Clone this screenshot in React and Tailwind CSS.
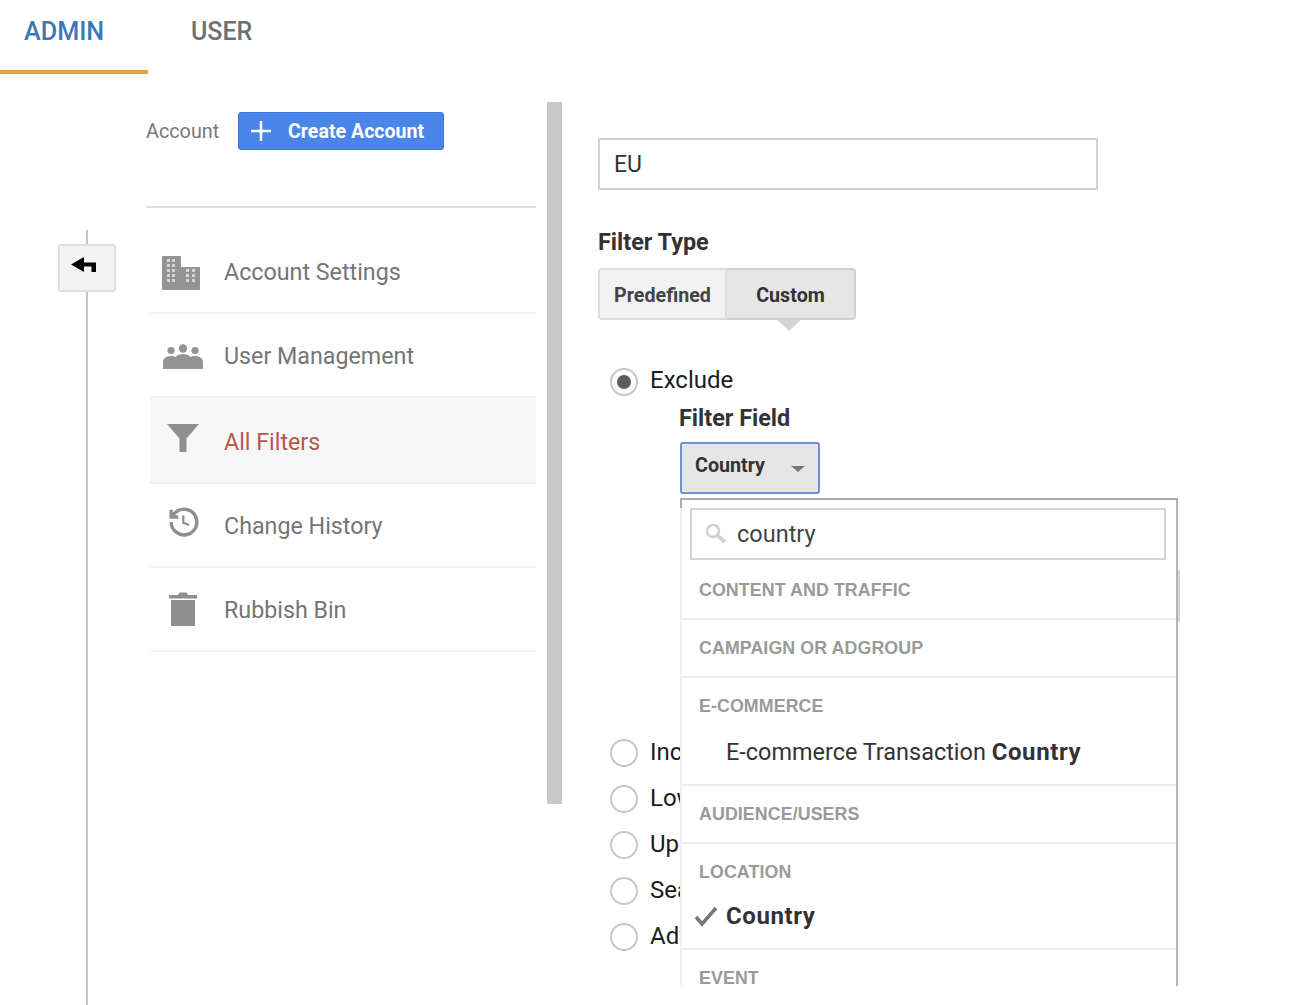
const roboto = "font-['Roboto',sans-serif]";

function BuildingIcon() {
  const holes = [[6,4],[11,4],[6,9],[11,9],[6,14],[11,14],[6,19],[11,19],[6,24],[11,24],[25,14],[31,14],[25,19],[31,19],[25,24],[31,24]];
  return (
    <svg width="40" height="36" viewBox="0 0 40 36">
      <path d="M1 1h19v11h19v23H1z" fill="#949494" />
      {holes.map(([x, y]) => <rect key={`${x}-${y}`} x={x} y={y} width="3" height="3" fill="#d6d6d6" />)}
    </svg>
  );
}
function UsersIcon() {
  return (
    <svg width="40" height="26" viewBox="0 0 40 26" fill="#949494">
      <circle cx="8" cy="6.5" r="3.6" /><circle cx="20" cy="4.5" r="4.2" /><circle cx="32" cy="6.5" r="3.6" />
      <path d="M0 25v-7c0-4 4-6 8-6 2 0 3 .4 4.300 1 2-2 5-3 7.700-3s5.700 1 7.700 3c1.300-.6 2.300-1 4.300-1 4 0 8 2 8 6v7z" />
    </svg>
  );
}
function FilterIcon() {
  return (
    <svg width="34" height="30" viewBox="0 0 34 30" fill="#8f8f8f">
      <path d="M1 1h32L20.500 15.500V29h-7V15.500z" />
    </svg>
  );
}
function HistoryIcon() {
  return (
    <svg width="30" height="30" viewBox="2 1.500 21 21" fill="none" stroke="#8f8f8f" strokeWidth="2.400">
      <path d="M3.500 12a9 9 0 1 0 2.800-6.500L3.500 8" />
      <path d="M3.500 3.500V8.500H8.500" />
      <path d="M12 7.500V12.500l4 1.500" strokeWidth="1.600" />
    </svg>
  );
}
function TrashIcon() {
  return (
    <svg width="30" height="36" viewBox="0 0 30 36" fill="#8f8f8f">
      <path d="M1 4h9l1.500-2.500h7L20 4h9v3.500H1z" />
      <rect x="3" y="9" width="24" height="26" />
    </svg>
  );
}
function BackIcon() {
  return (
    <svg width="25" height="16" viewBox="0 0 25 16" fill="#000">
      <path d="M0 7.500 13 0V5.500H25V15H20.500V9.500H13V15z" />
    </svg>
  );
}

function NavItem({ icon, label, active, iconClass }) {
  return (
    <div className={`flex items-center border-b-2 ml-1 ${active ? "pt-[5px] bg-[#f7f7f7] border-[#f0f0f0] h-[86px]" : "pt-[3px] border-[#f2f2f2] h-[84px]"}`}>
      <div className={`w-[74px] flex justify-center ${iconClass || "pr-[8px]"}`}>{icon}</div>
      <span className={`text-[23.250px] ${active ? "text-[#b5574e]" : "text-[#757575]"} ${roboto}`}>{label}</span>
    </div>
  );
}

function Radio({ checked, label, circleClass, labelClass }) {
  return (
    <div className="flex items-center h-[46px] pl-[12px]">
      <span className={`w-[28px] h-[28px] rounded-full border-2 border-[#c8c8c8] flex items-center justify-center shrink-0 ${circleClass || ""}`}>
        {checked && <span className="w-[14px] h-[14px] rounded-full bg-[#5c5c5c]" />}
      </span>
      <span className={`ml-[12px] text-[24px] text-[#1c1c1c] ${labelClass || "mb-[2px]"} ${roboto}`}>{label}</span>
    </div>
  );
}

function Section({ title, children, h = "h-[58px]", pt = "pt-[13px]" }) {
  return (
    <div className={`${h} ${pt} border-b-2 border-[#ececec] pl-[17px]`}>
      <div className="text-[17.800px] leading-[30px] font-bold text-[#9a9a9a] font-['Liberation_Sans',sans-serif] tracking-[0.1px]">{title}</div>
      {children}
    </div>
  );
}

export default function App() {
  return (
    <div className="w-[1316px] h-[1005px] overflow-hidden bg-white flex flex-col">
      <header className={`h-[74px] flex shrink-0 ${roboto}`}>
        <div className="w-[148px] border-b-[4px] border-[#e3a23f] pl-[24px] pt-[15px] text-[25.200px] leading-[33px] font-medium text-[#3b78b8]">ADMIN</div>
        <div className="pl-[43px] pt-[15px] text-[25px] leading-[33px] font-medium text-[#6f6f6f]">USER</div>
      </header>

      <div className="flex flex-1 min-h-0">
        <div className="w-[146px] shrink-0 pl-[58px] pt-[156px] flex flex-col">
          <div className="w-[58px] flex flex-col items-center flex-1">
            <div className="w-[2px] h-[14px] bg-[#c8c8c8]" />
            <div className="w-[58px] h-[48px] rounded-[3px] border-2 border-[#e0e0e0] bg-[#f3f3f3] flex pl-[11px] pt-[11px]"><BackIcon /></div>
            <div className="w-[2px] flex-1 bg-[#c8c8c8]" />
          </div>
        </div>

        <nav className="w-[390px] shrink-0 pt-[38px]">
          <div className="flex items-center h-[38px]">
            <span className={`w-[92px] shrink-0 pt-[2px] text-[19.800px] text-[#777] ${roboto}`}>Account</span>
            <button className={`w-[206px] h-[38px] rounded-[3px] bg-[#4a86e8] border border-[#3b78d8] text-white flex items-center pl-[10px] ${roboto}`}>
              <svg width="24" height="24" viewBox="0 0 24 24" stroke="#fff" strokeWidth="2.500"><path d="M12 2v20M2 12h20" /></svg>
              <span className="ml-[15px] pt-[1px] text-[19.600px] font-bold">Create Account</span>
            </button>
          </div>
          <div className="h-[2px] bg-[#dedede] mt-[56px] mb-[22px]" />
          <div className="mt-[1px]">
            <NavItem icon={<BuildingIcon />} label="Account Settings" iconClass="pr-[12px]" />
            <NavItem icon={<UsersIcon />} label="User Management" />
            <NavItem icon={<FilterIcon />} label="All Filters" active iconClass="pr-[8px] mb-[10px]" />
            <NavItem icon={<HistoryIcon />} label="Change History" iconClass="pr-[6px] mb-[9px]" />
            <NavItem icon={<TrashIcon />} label="Rubbish Bin" iconClass="pr-[8px] mb-[3px]" />
          </div>
        </nav>

        <div className="ml-[11px] mt-[28px] w-[15px] h-[702px] shrink-0 bg-[#c8c8c8]" />

        <main className={`ml-[36px] pt-[64px] flex-1 relative ${roboto}`}>
          <div className="w-[500px] h-[52px] border-2 border-[#d0d0d0] flex items-center pl-[14px] pt-[2px] text-[23px] text-[#333]">EU</div>
          <h2 className="mt-[37px] text-[23.400px] leading-[30px] font-bold text-[#333]">Filter Type</h2>
          <div className="mt-[11px] flex w-[258px] h-[52px] relative">
            <div className="w-[129px] pt-[4px] rounded-l-[4px] border-2 border-[#dcdcdc] bg-[#f2f2f2] flex items-center justify-center text-[19.700px] font-bold text-[#444]">Predefined</div>
            <div className="w-[129px] pt-[4px] rounded-r-[4px] border-2 border-l-0 border-[#d0d0d0] bg-[#e6e6e6] flex items-center justify-center text-[19.700px] font-bold text-[#333]">Custom</div>
            <span className="absolute left-[179px] top-[52px] w-0 h-0 border-x-[12px] border-x-transparent border-t-[11px] border-t-[#d6d6d6]" />
          </div>
          <div className="mt-[37px]"><Radio checked label="Exclude" circleClass="mt-[3px]" labelClass="mb-0" /></div>
          <div className="pl-[82px]">
            <h3 className="-ml-[1px] text-[23.400px] leading-[30px] font-bold text-[#333]">Filter Field</h3>
            <div className="mt-[9px] w-[140px] h-[52px] rounded-[3px] border-2 border-[#6a94cf] bg-[#e6e6e6] flex items-center pl-[13px] text-[19.700px] font-bold text-[#333]">
              <span className="mb-[4px]">Country</span>
              <span className="ml-[26px] mt-[2px] w-0 h-0 border-x-[7px] border-x-transparent border-t-[6px] border-t-[#777]" />
            </div>
          </div>
          <div className="mt-[236px]">
            <Radio label="Include" />
            <Radio label="Lowercase" />
            <Radio label="Uppercase" />
            <Radio label="Search and Replace" />
            <Radio label="Advanced" />
          </div>

          <span className="absolute left-[82px] top-[424px] w-[2px] h-[10px] bg-[#ababab] z-10" />
          <span className="absolute left-[580px] top-[496px] w-[2px] h-[52px] bg-[#d4d4d4]" />
          <div className="absolute left-[82px] top-[424px] w-[498px] h-[488px] bg-white border-t-2 border-t-[#ababab] border-r-2 border-r-[#b4b4b4] border-l-2 border-l-[#f0f0f0] overflow-hidden">
            <div className="pl-[8px] pr-[10px] pt-[8px]">
              <div className="h-[52px] border-2 border-[#d4d4d4] flex items-center pl-[12px]">
                <svg width="24" height="24" viewBox="0 0 24 24" fill="none" stroke="#d2d2d2">
                  <circle cx="9" cy="9" r="6" strokeWidth="2.500" />
                  <path d="M13.500 13.500 21 20" strokeWidth="4" />
                </svg>
                <span className="ml-[9px] pt-[2px] text-[23.500px] text-[#444]">country</span>
              </div>
            </div>
            <Section title="CONTENT AND TRAFFIC" h="h-[60px]" pt="pt-[15px]" />
            <Section title="CAMPAIGN OR ADGROUP" />
            <Section title="E-COMMERCE" h="h-[108px]">
              <div className="mt-[15px] ml-[27px] text-[23.450px] leading-[32px] text-[#333]">E-commerce Transaction <b className="text-[24px] tracking-[0.6px]">Country</b></div>
            </Section>
            <Section title="AUDIENCE/USERS" />
            <Section title="LOCATION" h="h-[106px]">
              <div className="-ml-[5px] mt-[13px] flex items-center">
                <svg width="26" height="24" viewBox="0 0 26 24" fill="none" stroke="#777" strokeWidth="3.500"><path d="M2 13l6 7L22 4" /></svg>
                <span className="ml-[6px] text-[24px] tracking-[0.6px] leading-[32px] font-bold text-[#333]">Country</span>
              </div>
            </Section>
            <Section title="EVENT" h="h-[40px]" />
          </div>
        </main>
      </div>
    </div>
  );
}
